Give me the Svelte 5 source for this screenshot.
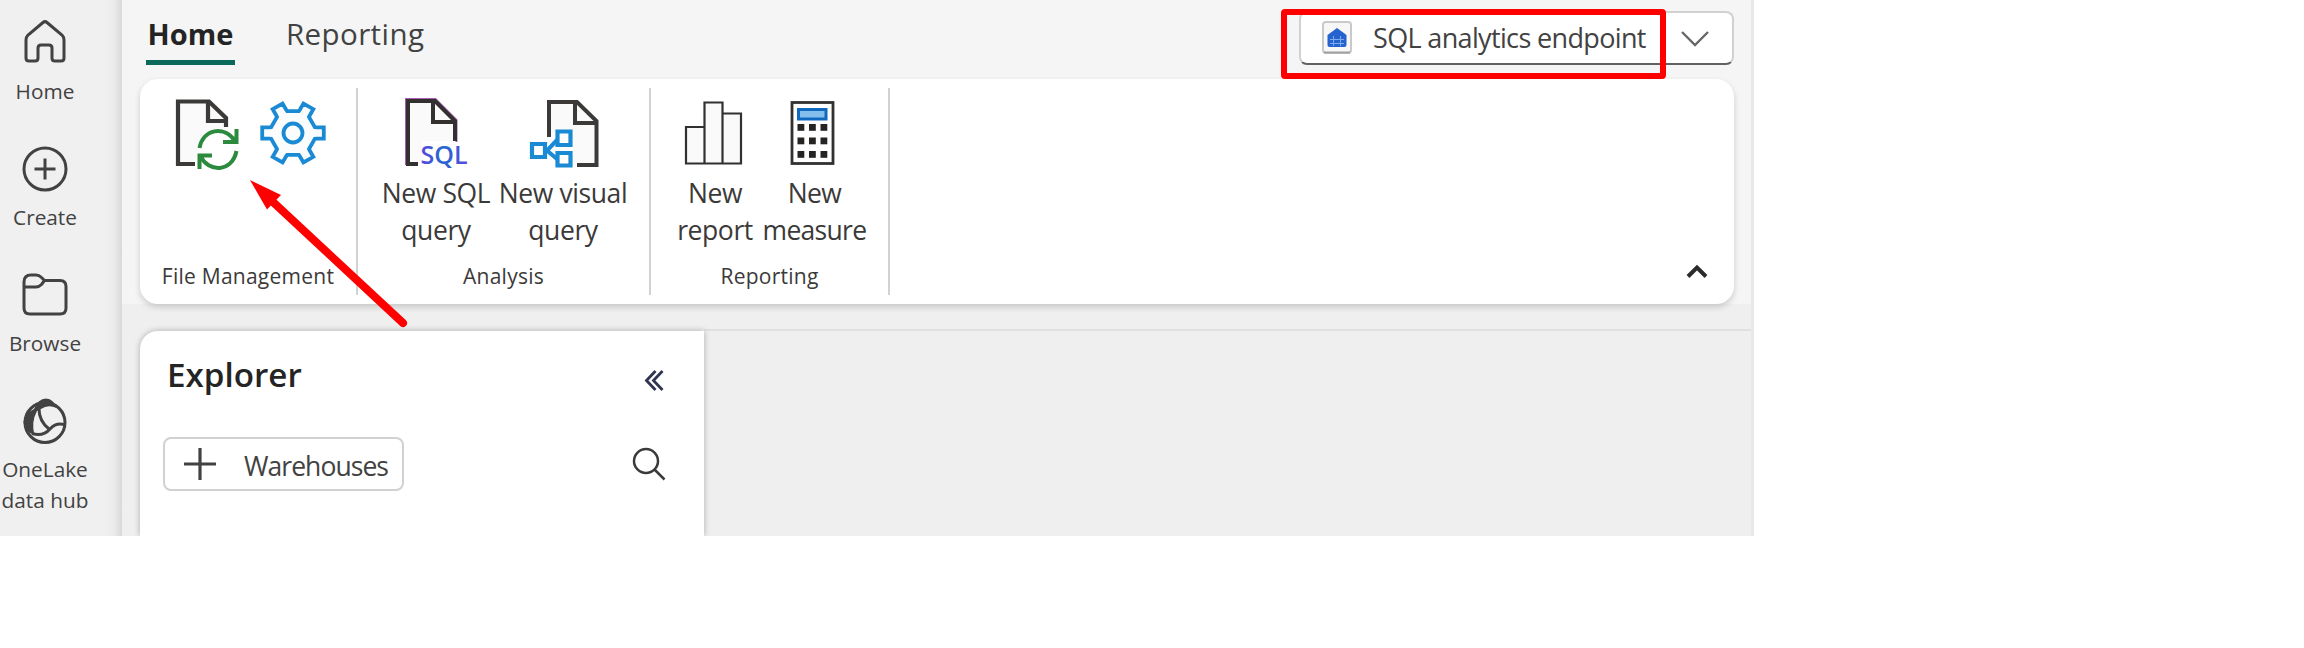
<script>
  const rail = [
    { id: 'home', lines: ['Home'] },
    { id: 'create', lines: ['Create'] },
    { id: 'browse', lines: ['Browse'] },
    { id: 'lake', lines: ['OneLake', 'data hub'] }
  ];

  const gear = [0, 60, 120, 180, 240, 300]
    .flatMap((a) =>
      [[22.6, -15], [24.5, -13.5], [31.3, -10.5], [31.3, 10.5], [24.5, 13.5], [22.6, 15]].map(([r, d]) => {
        const t = ((a + d) * Math.PI) / 180;
        return `${(36 + r * Math.cos(t)).toFixed(2)},${(37 + r * Math.sin(t)).toFixed(2)}`;
      })
    )
    .join(' ');
</script>

<div class="app">
  <nav class="rail">
    {#each rail as item}
      <div class="item">
        <svg width="48" height="48" viewBox="0 0 48 48" fill="none" stroke="#424242" stroke-width="3">
          {#if item.id === 'home'}
            <path d="M22 3.5 Q24 1.8 26 3.5 L41 16 Q43 18 43 21 V39 Q43 42 40 42 H34 Q31 42 31 39 V29 Q31 26 28 26 H20 Q17 26 17 29 V39 Q17 42 14 42 H8 Q5 42 5 39 V21 Q5 18 7 16 Z" />
          {:else if item.id === 'create'}
            <circle cx="24" cy="24" r="21" /><path d="M24 13.500 V34.500 M13.500 24 H34.500" />
          {:else if item.id === 'browse'}
            <path d="M3 11 Q3 4 10 4 H15 Q18 4 20.500 6.500 L23.500 9.500 H39 Q45 9.500 45 15.500 V37 Q45 43 39 43 H9 Q3 43 3 37 Z M3 16 H15 Q18 16 20.500 13.500 L23.500 9.500" />
          {:else}
            <circle cx="24" cy="25.500" r="20" />
            <path d="M13 12 Q17 1.500 25 1.500 Q33 2 35.500 11 Q27 7 20 12 L16 14 Q10 25 13.500 38 Q3 35 2.500 25 Q3 17 13 12Z" fill="#424242" stroke="none" />
            <path d="M18 12 Q18 24 28 32 M11 36.500 Q22 40 29 32 Q35 25.500 43 27.500" />
          {/if}
        </svg>
        <div class="rail-label">
          {#each item.lines as line}<span>{line}</span>{/each}
        </div>
      </div>
    {/each}
  </nav>

  <div class="main">
    <div class="top">
      <header>
        <div class="tabs">
          <div class="tab active">Home</div>
          <div class="tab">Reporting</div>
        </div>
        <div class="mode">
          <svg class="db" width="30" height="34" viewBox="0 0 30 34">
            <rect x="1" y="1" width="28" height="31" rx="3" fill="#f7f7f7" stroke="#c9c9c9" stroke-width="2" />
            <path d="M2 31.500 H28" stroke="#a0a0a0" stroke-width="2" />
            <path d="M5.500 14 L15 7 L24.500 14 V24 Q24.500 26 22.500 26 H7.500 Q5.500 26 5.500 24Z" fill="#2564cf" />
            <path d="M8 18.500 H22 M8 22.500 H22 M11.500 15 V25 M18.500 15 V25" stroke="#7fa8ee" stroke-width="1" />
          </svg>
          <span>SQL analytics endpoint</span>
          <svg class="caret" width="28" height="18" viewBox="0 0 28 18" fill="none" stroke="#686868" stroke-width="2.400"><path d="M1 3 L14 16 L27 3" /></svg>
          <div class="highlight"></div>
        </div>
      </header>

      <section class="ribbon">
        <div class="group files">
          <div class="buttons">
            <svg width="72" height="74" viewBox="0 0 72 74" fill="none">
              <path d="M12 5.500 H43 L60 22 V33 L45 38 L35 50 L29 68 H12Z" fill="#fafafa" />
              <path d="M29 68 H12 V5.500 H43 L60 22 V31 M42 5.500 V25 H60" stroke="#3b3a39" stroke-width="4.200" />
              <path d="M33.500 52 C37 33 58 29 69 45 M70.500 33 V46 H57 M33.500 73 V59.500 H46 M34.500 60 C42 76.500 66 77 70.500 55" stroke="#2b8a3e" stroke-width="4" />
            </svg>
            <svg width="72" height="74" viewBox="0 0 72 74" fill="none" stroke="#1a8ad4" stroke-width="3.800">
              <polygon points={gear} fill="#fafcfe" /><circle cx="36" cy="37" r="9.500" />
            </svg>
          </div>
          <div class="caption">File Management</div>
        </div>

        <div class="group analysis">
          <div class="buttons">
            <div class="btn sql">
              <svg width="72" height="72" viewBox="0 0 72 72" fill="none">
                <defs><linearGradient id="ink"><stop stop-color="#5a48dc" /><stop offset=".5" stop-color="#2468d0" /><stop offset="1" stop-color="#5a48dc" /></linearGradient></defs>
                <path d="M8 5 H35 L55 25 V45 H22 V68 H8Z" fill="#fafafa" />
                <path d="M6 69 V3 H35.500 L56.500 24 V46" stroke="#a95bb5" stroke-width="2" />
                <path d="M18 68 H8 V5 H35 L55 25 V45 M33 5 V26 H55" stroke="#323130" stroke-width="4" />
                <text x="20.500" y="67.500" textLength="47" lengthAdjust="spacingAndGlyphs" fill="url(#ink)">SQL</text>
              </svg>
              <span>New SQL</span><span>query</span>
            </div>
            <div class="btn visual">
              <svg width="72" height="72" viewBox="0 0 72 72" fill="none">
                <path d="M22 6 H50 L69.500 25 V69 H46 V34 H28 L22 41Z" fill="#fafafa" />
                <path d="M22 41 V6 H50 L69.500 25 V69 H50 M48 6 V27 H69" stroke="#3b3a39" stroke-width="4" />
                <path d="M30.500 35.500 H43.500 V49 H30.500Z M30.500 57 H43.500 V69.500 H30.500Z M5 48 H18 V61 H5Z" fill="#fff" stroke="#1a8ad4" stroke-width="4.200" />
                <path d="M30 44 L20 54.500 L30 63" stroke="#1a8ad4" stroke-width="4" />
              </svg>
              <span>New visual</span><span>query</span>
            </div>
          </div>
          <div class="caption">Analysis</div>
        </div>

        <div class="group reports">
          <div class="buttons">
            <div class="btn report">
              <svg width="72" height="72" viewBox="0 0 72 72" fill="#fafafa" stroke="#323130" stroke-width="2.200">
                <path d="M7 31 H25.500 V67.500 H7Z M25.500 6.500 H43.500 V67.500 H25.500Z M43.500 17.500 H62 V67.500 H43.500Z" />
              </svg>
              <span>New</span><span>report</span>
            </div>
            <div class="btn measure">
              <svg width="72" height="72" viewBox="0 0 72 72">
                <rect x="13" y="6.500" width="41" height="61" fill="#fff" stroke="#323130" stroke-width="2.800" />
                <rect x="19.500" y="13.500" width="27.500" height="9.500" fill="#83beec" stroke="#1068bf" stroke-width="3" />
                {#each [28, 41.500, 55] as y}
                  {#each [18.500, 30, 41.500] as x}<rect {x} {y} width="6.800" height="6.800" fill="#252423" />{/each}
                {/each}
              </svg>
              <span>New</span><span>measure</span>
            </div>
          </div>
          <div class="caption">Reporting</div>
        </div>

        <svg class="collapse" width="24" height="18" viewBox="0 0 24 18" fill="none" stroke="#2b2b2b" stroke-width="4"><path d="M3 14.500 L12 5.500 L21 14.500" /></svg>
      </section>
    </div>

    <div class="work">
      <aside>
        <div class="head">
          <h2>Explorer</h2>
          <svg width="22" height="24" viewBox="0 0 22 24" fill="none" stroke="#2f3550" stroke-width="2.800"><path d="M11.500 3 L2.500 12.500 L11.500 22 M18.500 3 L9.500 12.500 L18.500 22" /></svg>
        </div>
        <div class="tools">
          <div class="add">
            <svg width="34" height="34" viewBox="0 0 34 34" stroke="#424242" stroke-width="3.200"><path d="M17 1 V33 M1 17 H33" /></svg>
            <span>Warehouses</span>
          </div>
          <svg width="34" height="34" viewBox="0 0 34 34" fill="none" stroke="#3a3a3a" stroke-width="2.500"><circle cx="14" cy="14" r="12" /><path d="M22.500 22.500 L32.500 32.500" /></svg>
        </div>
      </aside>
      <div class="canvas"></div>
    </div>
  </div>

  <svg class="arrow" width="170" height="160" viewBox="0 0 170 160">
    <path d="M28 27 L158 148" stroke="#f00" stroke-width="8" stroke-linecap="round" />
    <path d="M5 5 L36 20 L22 34.500Z" fill="#f00" />
  </svg>
</div>

<style>
  :global(body) { background: #fff; }
  .app { position: relative; display: flex; width: 1754px; height: 536px; overflow: hidden; font-family: "Open Sans", sans-serif; color: #424242; background: #efefef; }
  svg { display: block; flex: none; overflow: visible; }

  .rail { width: 122px; flex: none; box-sizing: border-box; background: linear-gradient(90deg, #f0f0f0 0 105px, #ebebeb 114px, #d9d9d9 122px); }
  .item { width: 90px; height: 126px; box-sizing: border-box; padding-top: 19px; display: flex; flex-direction: column; align-items: center; gap: 9px; }
  .rail-label { display: flex; flex-direction: column; align-items: center; font-size: 20.800px; line-height: 31px; white-space: nowrap; }

  .main { flex: 1; min-width: 0; display: flex; flex-direction: column; border-right: 3px solid #e8e8e8; }
  .top { height: 304px; flex: none; background: #f5f5f5; padding: 0 17px 0 18px; box-sizing: border-box; }
  header { height: 79px; display: flex; justify-content: space-between; }
  .tabs { display: flex; gap: 51px; padding-left: 6px; }
  .tab { height: 65px; box-sizing: border-box; padding-top: 12px; font-size: 29.500px; letter-spacing: .4px; line-height: 44px; white-space: nowrap; }
  .tab.active { width: 89px; font-size: 29px; letter-spacing: 0; text-align: center; font-weight: 700; color: #242424; border-bottom: 5px solid #0c695a; }

  .mode { position: relative; width: 435px; height: 54px; margin-top: 11px; box-sizing: border-box; display: flex; align-items: center; background: #fff; border: 2px solid #d1d1d1; border-bottom-color: #616161; border-radius: 8px; padding-left: 21px; }
  .mode span { width: 274px; margin-left: 21px; font-size: 27px; letter-spacing: -.65px; line-height: 40px; white-space: nowrap; }
  .caret { margin-left: 34px; }
  .highlight { position: absolute; left: -20px; top: -4px; width: 385px; height: 70px; box-sizing: border-box; border: 6.500px solid #f00; border-radius: 4px; }

  .ribbon { height: 225px; box-sizing: border-box; padding-top: 9px; display: flex; background: #fff; border-radius: 18px; box-shadow: 0 3px 6px rgba(0, 0, 0, .17); position: relative; }
  .group { height: 207px; box-sizing: border-box; display: flex; flex-direction: column; justify-content: space-between; padding: 8px 0 5px; border-right: 2px solid #d2d2d2; }
  .files { width: 218px; }
  .analysis { width: 293px; }
  .reports { width: 239px; }
  .buttons { display: flex; }
  .files .buttons { gap: 19px; padding-left: 26px; }
  .analysis .buttons { gap: 6px; padding-left: 22px; }
  .reports .buttons { gap: 9px; padding-left: 25px; }
  .btn { display: flex; flex-direction: column; align-items: center; font-size: 26.500px; letter-spacing: -.4px; line-height: 37px; white-space: nowrap; color: #3b3a39; }
  .btn svg { margin-bottom: 7px; }
  .btn text { font: 600 25px "Open Sans", sans-serif; letter-spacing: 0; }
  .sql { width: 112px; }
  .visual { width: 130px; }
  .report { width: 78px; }
  .measure { width: 103px; letter-spacing: -.7px; }
  .buttons { height: 154px; }
  .caption { text-align: center; font-size: 21px; letter-spacing: .25px; line-height: 28px; color: #3b3a39; white-space: nowrap; }
  .collapse { margin: 174px 25px 0 auto; }

  .work { flex: 1; display: flex; padding: 25px 0 0 18px; }
  aside { width: 564px; flex: none; background: #fff; border-radius: 18px 0 0 0; box-sizing: border-box; padding: 23px 38px 0 23px; margin-top: 2px; box-shadow: 0 0 6px rgba(0, 0, 0, .28); position: relative; }
  .head { height: 52px; display: flex; justify-content: space-between; align-items: center; padding-left: 4px; }
  h2 { margin: -11px 0 0; font-size: 33.200px; line-height: 44px; font-weight: 600; color: #242424; }
  .tools { margin-top: 31px; display: flex; justify-content: space-between; align-items: center; }
  .add { width: 241px; height: 54px; box-sizing: border-box; border: 2px solid #d1d1d1; border-radius: 8px; display: flex; align-items: center; padding-left: 18px; gap: 27px; font-size: 26.500px; letter-spacing: -.95px; line-height: 40px; white-space: nowrap; }
  .add span { padding-top: 3px; }
  .canvas { flex: 1; border-top: 2px solid #e0e0e0; }

  .arrow { position: absolute; left: 245px; top: 175px; }
</style>
